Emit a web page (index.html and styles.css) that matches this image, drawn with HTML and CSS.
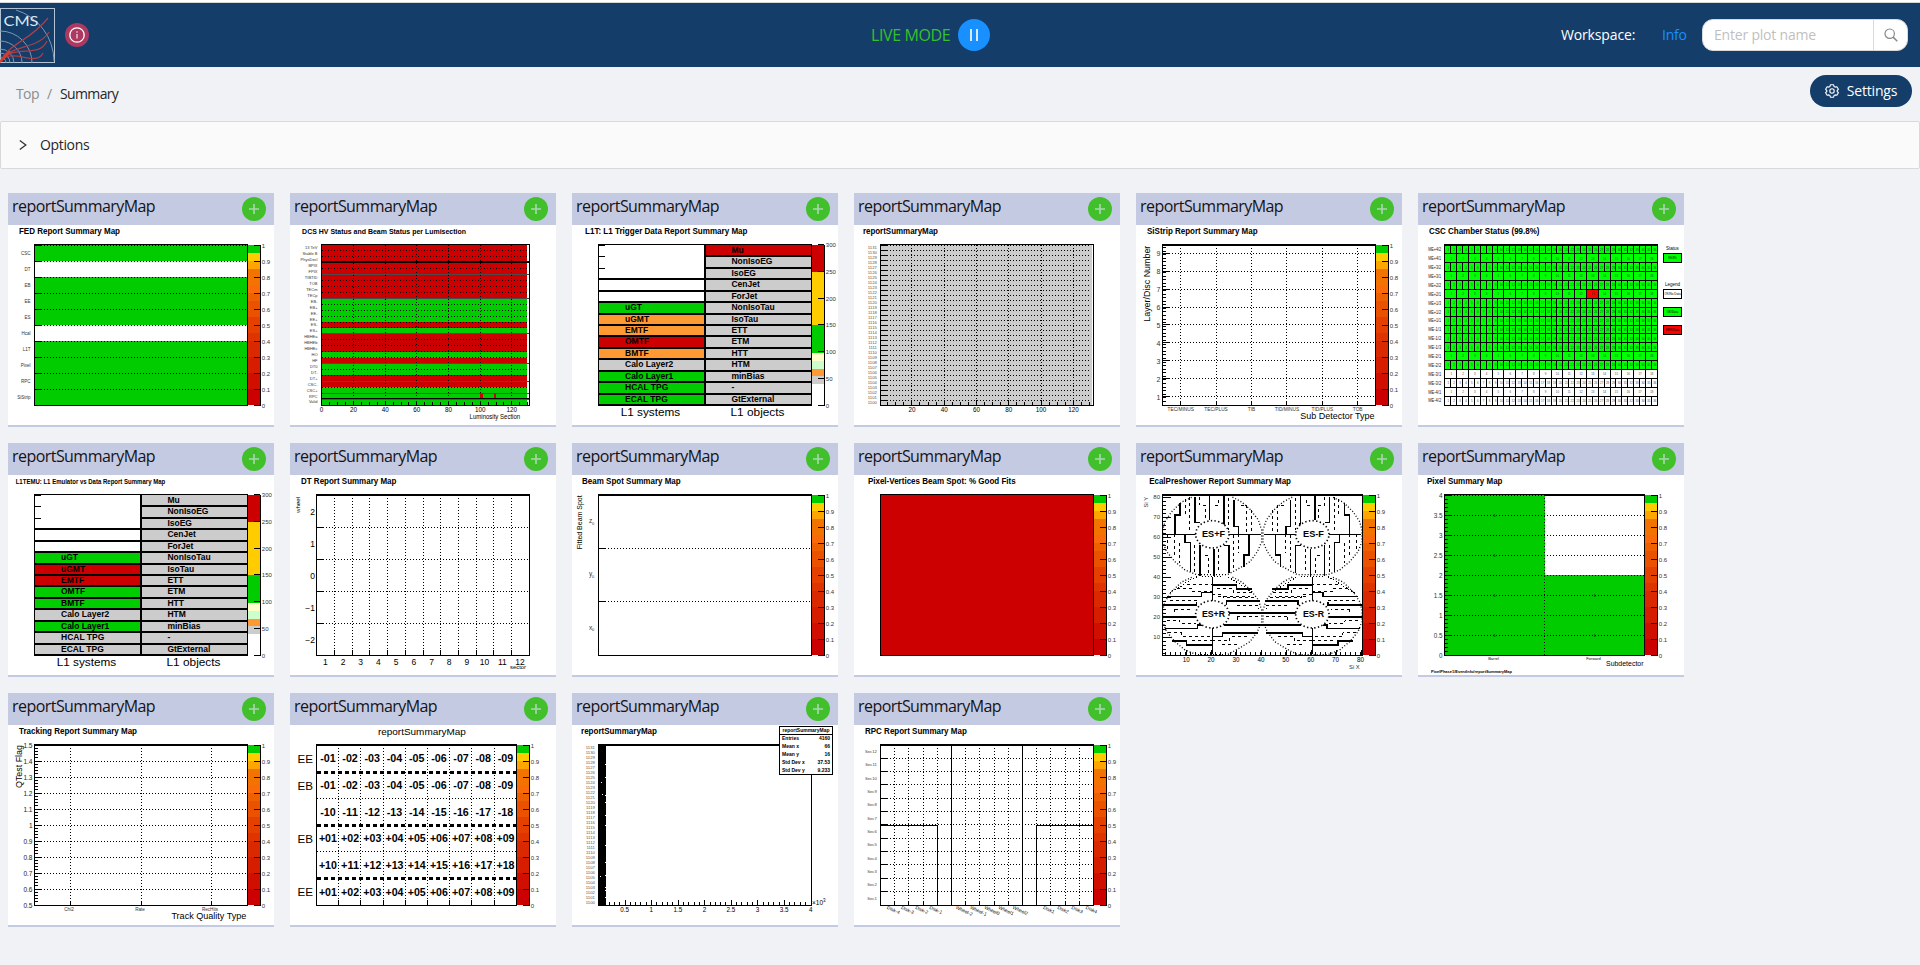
FILE: index.html
```html
<!DOCTYPE html>
<html lang="en">
<head>
<meta charset="utf-8">
<title>CMS DQM - Summary</title>
<link rel="stylesheet" href="styles.css">
</head>
<body>
<header class="topbar">
  <div class="brand">
    <svg class="logo" width="55" height="55" viewBox="0 0 55 55">
      <g fill="none" stroke="#7f98b5" stroke-width="1">
        <rect x=".5" y=".5" width="54" height="54" stroke="#b4c3d4"/>
        <path d="M0 49a6 6 0 0 1 6 6M0 45a10 10 0 0 1 10 10M0 41a14 14 0 0 1 14 14M0 33a22 22 0 0 1 22 22M0 23a32 32 0 0 1 32 32M16 2a54 54 0 0 1 38 51"/>
      </g>
      <g fill="none" stroke="#a93f48" stroke-width="1.3">
        <path d="M0 54C10 34 29 34 48 10M0 54C10 36 38 42 49 24M0 54C14 34 38 52 47 33M0 54C12 38 36 60 43 45"/>
      </g>
      <path d="M0 54L10 43" stroke="#e03a2c" stroke-width="2"/>
      <text class="logo-text" x="3.5" y="18" textLength="35" lengthAdjust="spacingAndGlyphs">CMS</text>
    </svg>
    <span class="info-badge">
      <svg width="16" height="16" viewBox="0 0 16 16"><circle cx="8" cy="8" r="7.2" fill="none" stroke="#fff" stroke-width="1.3"/><path d="M8 7v4.6M8 4.2v1.5" stroke="#e3c3d0" stroke-width="1.5"/></svg>
    </span>
  </div>
  <div class="live"><span class="live-text">LIVE MODE</span><span class="pause"><i></i><i></i></span></div>
  <div class="tools">
    <span class="ws-label">Workspace:</span><a class="ws-link">Info</a>
    <div class="search"><span class="search-text">Enter plot name</span><span class="search-btn">
      <svg width="14" height="14" viewBox="0 0 14 14" fill="none" stroke="#888" stroke-width="1.2"><circle cx="5.7" cy="5.7" r="4.7"/><path d="M9.1 9.1L13.3 13.3" stroke-width="1.5"/></svg></span></div>
  </div>
</header>
<nav class="crumbs">
  <div><span class="crumb-top">Top</span><span class="sep">/</span><span class="crumb-cur">Summary</span></div>
  <button class="settings">
    <svg width="14" height="14" viewBox="0 0 14 14" fill="none" stroke="#fff" stroke-width="1.1" stroke-linejoin="round"><circle cx="7" cy="7" r="2.2"/><path d="M5.4.8h3.2l.5 1.7 1 .6 1.8-.4 1.5 2.6L12.200 6.500v1l1.200 1.200-1.500 2.600-1.800-.4-1 .6-.5 1.700H5.400l-.5-1.700-1-.6-1.800.4L.6 8.700l1.200-1.200v-1L.6 5.300l1.500-2.600 1.800.4 1-.6z"/></svg>
    <span>Settings</span>
  </button>
</nav>
<section class="options">
  <svg width="8" height="10" viewBox="0 0 8 10" fill="none" stroke="#333" stroke-width="1.3"><path d="M.8.6L6.800 5L.8 9.400"/></svg>
  <span>Options</span>
</section>
<main class="plots" id="plots"></main>
<script src="plots.js"></script>
</body>
</html>
```
FILE: styles.css
```css
* { box-sizing: border-box; }
body {
  margin: 0;
  background: #f0f2f5;
  font: 14px/22px "Open Sans", "Noto Sans", sans-serif;
  color: #262626;
  border-top: 2px solid #fff;
  height: 965px;
  overflow: hidden;
}
.topbar {
  height: 65px;
  border-top: 1px solid #d5d8dc;
  background: #143d69;
  display: grid;
  grid-template-columns: 871px 1fr auto;
  align-items: center;
}
.brand { display: flex; align-items: center; gap: 10px; }
.logo { display: block; }
.logo-text { font: 14px Lato, sans-serif; fill: #dfe6ee; }
.info-badge {
  width: 24px; height: 24px; border-radius: 50%;
  background: #ad3961;
  display: flex; align-items: center; justify-content: center;
}
.live { display: flex; align-items: center; gap: 7px; color: #36c02c; font-size: 16px; }
.live-text { letter-spacing: -.4px; width: 80px; white-space: nowrap; }
.pause {
  width: 32px; height: 32px; border-radius: 50%; background: #1890ff;
  display: flex; align-items: center; justify-content: center; gap: 4px;
}
.pause i { width: 2px; height: 12px; background: #d5eaff; }
.tools { display: flex; align-items: center; padding-right: 12px; }
.ws-label { color: #fff; width: 101px; font-weight: 500; white-space: nowrap; letter-spacing: -.15px; }
.ws-link { color: #1890ff; width: 40px; letter-spacing: -.2px; }
.search {
  width: 206px; height: 32px; background: #fff; border: 1px solid #d9d9d9; border-radius: 11px;
  display: flex; align-items: stretch; line-height: 30px; color: #bfbfbf;
}
.search-text { flex: 1; padding-left: 11px; white-space: nowrap; letter-spacing: -.2px; }
.search-btn { width: 34px; border-left: 1px solid #d9d9d9; display: flex; align-items: center; justify-content: center; }
.crumbs { height: 54px; display: flex; justify-content: space-between; padding: 8px 8px 0 16px; }
.crumbs > div { padding-top: 8px; }
.crumb-top, .sep { color: #8c8c8c; }
.crumb-top { letter-spacing: -.6px; }
.sep { margin: 0 8px; }
.crumb-cur { letter-spacing: -.65px; }
.settings {
  width: 102px; height: 32px; border: 0; border-radius: 16px; background: #143d69; color: #fff;
  font: inherit; letter-spacing: -.2px; display: flex; align-items: center; justify-content: center; gap: 8px; padding: 0;
}
.options {
  height: 48px; border: 1px solid #d9d9d9; border-radius: 2px; background: #fafafa;
  display: flex; align-items: center; gap: 13px; padding-left: 18px; letter-spacing: -.35px;
}
.plots { padding: 24px 8px; display: grid; grid-template-columns: repeat(6, 266px); gap: 16px; }
.card { background: #fff; border-bottom: 2px solid #c5cae3; height: 234px; }
.card-head {
  height: 32px; background: #c5cae3; display: flex; justify-content: space-between;
  padding: 4px 8px 0 4px;
}
.card-title { font-size: 16px; line-height: 18px; letter-spacing: -.55px; color: #141414; }
.add {
  width: 24px; height: 24px; border-radius: 50%; background: #41c02c;
  display: flex; align-items: center; justify-content: center;
}
.plot { display: block; }
.plot text { font-family: "Liberation Sans", Arial, sans-serif; fill: #000; }
.plot .b { font-weight: bold; }
```
FILE: plots.js
```js
// Builds small SVG text/line fragments on a 266x200 canvas.
const r = n => Math.round(n * 100) / 100;
const half = n => Math.floor(n) + .5;

function T(x, y, s, size, o = {}) {
  const a = o.a ? ` text-anchor="${o.a}"` : '';
  const l = o.len ? ` textLength="${r(o.len)}" lengthAdjust="spacingAndGlyphs"` : '';
  const t = o.rot ? ` transform="rotate(${o.rot} ${r(x)} ${r(y)})"` : '';
  const f = o.f ? ` style="fill:${o.f}"` : '';
  return `<text x="${r(x)}" y="${r(y)}" font-size="${size}"${a}${l}${t}${f}${o.b ? ' class="b"' : ''}>${s}</text>`;
}
const R = (x, y, w, h, f, st = '') => `<rect x="${r(x)}" y="${r(y)}" width="${r(w)}" height="${r(h)}" fill="${f}" ${st} shape-rendering="crispEdges"/>`;
const P = (d, w = 1, extra = '') => `<path d="${d}" fill="none" stroke="#000" stroke-width="${w}" shape-rendering="crispEdges" ${extra}/>`;
const DOT = 'stroke-dasharray="1 2"';
const H = (y, x1, x2, w, e) => P(`M${r(x1)} ${w === 2 ? Math.round(y) : half(y)}H${r(x2)}`, w, e);
const V = (x, y1, y2, w, e) => P(`M${half(x)} ${r(y1)}V${r(y2)}`, w, e);
const frame = (x2 = 239, top = 1) => P(`M26.500 19.500H${x2 + .5}V180.500H26.500Z`) + (top > 1 ? P(`M26 20H${x2 + 1}`, 2) : '');
const title = (x1, x2, s, size = 8.5) => T(x1, 9.3, s, size, { b: 1, len: x2 - x1 });

const PAL = [[0, .1, '#cc0000'], [.1, .2, '#d00f00'], [.2, .3, '#d61d00'], [.3, .4, '#da2800'], [.4, .45, '#df3400'],
  [.45, .55, '#e64000'], [.55, .65, '#ea5200'], [.65, .7, '#ee6000'], [.7, .75, '#fa6a0a'], [.75, .85, '#f27300'],
  [.85, .9, '#ffa500'], [.9, .95, '#ffcc00'], [.95, 1, '#00cc00']];
function bar(x = 240) {
  let s = PAL.map(([a, b, c]) => R(x, 180 - b * 160, 12, (b - a) * 160, c)).join('');
  s += V(x + 12, 20, 181, 1);
  for (let i = 0; i <= 10; i++) {
    const y = 180 - i * 16;
    s += H(y, x + 6, x + 12, 1) + T(x + 13.800, y + 2.700, i === 0 ? '0' : i === 10 ? '1' : '0.' + i, 6, { f: '#333' });
  }
  return s;
}
function bar300() {
  let s = '';
  [[20, 47, '#cc0000'], [47, 100, '#ffcc00'], [100, 127.700, '#00cc00'], [127.700, 136, '#ffffcc'], [136, 144, '#ccffcc'], [144, 151, '#ff9933'], [151, 159, '#cccccc']]
    .forEach(([a, b, c]) => { s += R(240, a, 12, b - a, c); });
  s += V(252, 20, 181, 1);
  for (let i = 0; i <= 6; i++) s += H(180 - i * 26.670, 246, 252, 1) + T(253.800, 182.500 - i * 26.670, i * 50, 6, { f: '#333' });
  return s;
}
function fed() {
  let s = R(27, 20, 212, 160, '#00cc00') + R(27, 36, 212, 16, '#fff') + R(27, 100, 212, 16, '#fff');
  ['CSC', 'DT', 'EB', 'EE', 'ES', 'Hcal', 'L1T', 'Pixel', 'RPC', 'SiStrip'].forEach((n, i) => {
    s += H(20 + i * 16, 27, 239, 1, DOT) + H(20 + i * 16, 27, 33, 1) + T(22.500, 30 + i * 16, n, 4.500, { a: 'end', f: '#333' });
  });
  return title(10.900, 112, 'FED Report Summary Map') + s + frame() + bar();
}
function dcs() {
  const n = ['13 TeV', 'Stable B', 'PhysDecl', 'BPIX', 'FPIX', 'TIBTID', 'TOB', 'TECm', 'TECp', 'EB-', 'EB+', 'EE-', 'EE+', 'ES-', 'ES+', 'HBHEa', 'HBHEb', 'HBHEc', 'HO', 'HF', 'DT0', 'DT-', 'DT+', 'CSC-', 'CSC+', 'RPC', 'Valid'];
  const c = 'RRRRRRRRRGGGGRGRRRGRGGRRGGG', h = 160 / 27;
  let s = title(12.100, 176, 'DCS HV Status and Beam Status per Lumisection', 7.300);
  n.forEach((t, i) => {
    s += R(32, Math.round(20 + i * h), 205, Math.round(20 + (i + 1) * h) - Math.round(20 + i * h), c[i] === 'R' ? '#cc0000' : '#00cc00');
    s += T(27.500, 24.400 + i * h, t, 4, { a: 'end', f: '#333' });
  });
  for (let i = 1; i < 27; i++) s += H(20 + i * h, 32, 237, 1, DOT);
  for (let i = 1; i < 7; i++) s += V(31.800 + i * 31.670, 20, 180, 1, DOT) + T(31.800 + i * 31.670, 187, i * 20, 6.300, { a: 'middle' });
  for (let i = 0; i < 27; i++) s += V(31.800 + i * 7.920, 177, 180, 1);
  s += T(31.500, 187, '0', 6.300, { a: 'middle' });
  s += R(190, 169, 2.500, 4, '#cc0000') + R(204, 169, 2, 4, '#cc0000');
  [49, 73, 108, 138, 156, 168].forEach(y => { s += R(32, y, 207, 1, '#4b4b4b'); });
  s += H(37, 32, 239, 2) + R(32, 173, 207, 1, '#000') + R(32, 174, 207, 1, '#555');
  return s + P('M31.500 19.500H239.500V180.500H31.500Z') + T(179.600, 194, 'Luminosity Section', 6.500, { len: 50.500 });
}
function l1(ttl, left, mu) {
  const c = { G: '#00cc00', O: '#ff9933', R: '#cc0000', g: '#cccccc', W: '#fff' };
  const L = ['', '', '', '', '', 'uGT', 'uGMT', 'EMTF', 'OMTF', 'BMTF', 'Calo Layer2', 'Calo Layer1', 'HCAL TPG', 'ECAL TPG'];
  const Q = ['Mu', 'NonIsoEG', 'IsoEG', 'CenJet', 'ForJet', 'NonIsoTau', 'IsoTau', 'ETT', 'ETM', 'HTT', 'HTM', 'minBias', '-', 'GtExternal'];
  const h = 160 / 14;
  let s = ttl;
  for (let i = 0; i < 14; i++) {
    const y = Math.round(20 + i * h), y2 = Math.round(20 + (i + 1) * h);
    s += R(27, y, 106, y2 - y, c[left[i]]) + R(133, y, 106, y2 - y, i ? c.g : mu);
    s += T(53, y + 8.200, L[i], 8.500, { b: 1 }) + T(159.400, y + 8.200, Q[i], 8.500, { b: 1 });
    if (i) s += H(y, i > 2 ? 27 : 133, 239, 2);
    if (i < 3) s += H(y, 27, 33, 1);
  }
  s += P('M133 20V181', 2) + frame(239) + P('M26 180H240', 2);
  return s + T(48.700, 191.300, 'L1 systems', 11, { len: 59.500 }) + T(158.500, 191.300, 'L1 objects', 11, { len: 54 }) + bar300();
}
const vals = () => { let s = ''; for (let i = 0; i < 32; i++) s += T(22.800, 24.300 + i * 5, 1131 - i, 4.200, { a: 'end', f: '#555' }); return s; };
function lumi() {
  let s = title(8.900, 84, 'reportSummaryMap') + R(27, 20, 210.500, 160, '#cccccc') + vals();
  for (let i = 0; i < 32; i++) s += H(20 + i * 5, 27, 237, 1, DOT) + H(20 + i * 5, 27, 33, 1);
  for (let i = 1; i < 7; i++) s += V(25.600 + i * 32.300, 20, 180, 1, DOT) + T(25.600 + i * 32.300, 187, i * 20, 6.300, { a: 'middle' });
  for (let i = 1; i < 27; i++) s += V(25.600 + i * 8.070, i % 4 ? 177 : 175, 180, 1);
  return s + frame();
}
function strip() {
  let s = title(11, 121.600, 'SiStrip Report Summary Map');
  for (let i = 1; i < 10; i++) { const y = 189.400 - i * 17.900; s += H(y, 27, 239, 1, DOT) + H(y, 27, 33, 1) + T(24.500, y + 3, i, 7, { a: 'end', f: '#333' }); }
  for (let i = 0; i < 45; i++) s += H(180 - i * 3.580, 27, 30, 1);
  ['TEC/MINUS', 'TEC/PLUS', 'TIB', 'TID/MINUS', 'TID/PLUS', 'TOB'].forEach((n, i) => { const x = 44.700 + i * 35.400; s += V(x, 20, 180, 1, DOT) + V(x, 176, 180, 1) + T(x, 185.500, n, 4.800, { a: 'middle', f: '#333' }); });
  return s + T(164.200, 194, 'Sub Detector Type', 8.500, { len: 74.300 }) + T(14.300, 96.700, 'Layer/Disc Number', 8.500, { rot: -90, len: 76 }) + frame(239, 2) + bar();
}
function csc() {
  const n = ['+4/2', '+4/1', '+3/2', '+3/1', '+2/2', '+2/1', '+1/3', '+1/2', '+1/1', '-1/1', '-1/2', '-1/3', '-2/1', '-2/2', '-3/1', '-3/2', '-4/1', '-4/2'];
  const wide = [1, 3, 5, 12, 14, 16], h = 160 / 18;
  let s = title(10.900, 121.500, 'CSC Chamber Status (99.8%)') + R(27, 20, 212, 124.500, '#00ff00') + R(168.500, 64, 12, 9, '#ff0000');
  n.forEach((t, i) => {
    const y = 20 + i * h, k = wide.includes(i) ? 18 : 36, w = 212.400 / k;
    s += H(y, 27, 239, 1) + T(23.200, y + 6.300, 'ME' + t, 4.500, { a: 'end', f: '#222', len: 13 });
    for (let j = 0; j < k; j++) {
      if (j) s += V(26.800 + j * w, y, y + h, 1);
      s += T(27.300 + (j + .5) * w, y + 5.800, j + 1, 2.800, { a: 'middle', f: i > 13 ? '#444' : '#052' });
    }
  });
  s += frame() + T(254.500, 24.800, 'Status', 4.500, { a: 'middle' }) + T(254.500, 61, 'Legend', 4.500, { a: 'middle' });
  [[28.500, '#00ff00', '99.8%'], [64.500, '#fff', 'OK/No Data'], [82.500, '#00ff00', 'OK/Data'], [100.500, '#ff0000', 'ERR/Data']].forEach(([y, c, t]) => {
    s += R(245.500, y, 18, 9, c, 'stroke="#000"') + T(254.500, y + 5.800, t, 3, { a: 'middle' });
  });
  return s;
}
function dt() {
  let s = title(11, 106.400, 'DT Report Summary Map');
  for (let i = 1; i < 5; i++) s += H(20 + i * 32, 27, 239, 1, DOT) + H(20 + i * 32, 27, 33, 1);
  [2, 1, 0, '−1', '−2'].forEach((n, i) => { s += T(25, 40 + i * 32, n, 8.500, { a: 'end' }); });
  for (let i = 0; i < 12; i++) {
    if (i) s += V(26.800 + i * 17.700, 20, 180, 1, DOT) + V(26.800 + i * 17.700, 175, 180, 1);
    s += T(35.300 + i * 17.700, 189.500, i + 1, 8.500, { a: 'middle' });
  }
  return s + T(220, 193.700, 'sector', 6, { len: 16 }) + T(10, 38, 'wheel', 6, { rot: -90, len: 16 }) + frame(239, 2);
}
function beam() {
  let s = title(10.100, 108.700, 'Beam Spot Summary Map') + H(73, 27, 239, 1, DOT) + H(73, 27, 33, 1) + H(126, 27, 239, 1, DOT) + H(126, 27, 33, 1);
  ['z', 'y', 'x'].forEach((n, i) => { s += T(17, 48 + i * 53.300, n, 6.500, { f: '#333' }) + T(20, 49.500 + i * 53.300, '0', 4, { f: '#333' }); });
  return s + T(10.500, 74.300, 'Fitted Beam Spot', 7, { rot: -90, len: 54 }) + frame(239, 2) + bar();
}
const vertices = () => title(13.900, 161.700, 'Pixel-Vertices Beam Spot: % Good Fits') + R(27, 20, 212, 160, '#cc0000') + frame() + bar();

// Preshower quadrants are drawn on a 3x grid; the right half mirrors the left.
function preshower() {
  const thickF = 'M90 68V105H75V163M40 163H137M135 50V128H150M179 48V120M222 48V132H226M252 60V140H266V163M237 163H333M105 165V188H121V275M150 196V287M192 206V287M222 196H237V280M297 163V225H282V262';
  const thickR = 'M187 290V365M187 444V522M187 315H260V327H307M50 350H155V338H187M37 375H140V366M230 375V363H330M37 411H137M237 399H338M45 446H143V435H155M222 435H338M187 470H217V459H325M65 483H110V495H187';
  const thinF = 'M108 56V110M120 52V150M150 50V76H168V120M205 60V76H193M236 55V150M272 76H290V163M305 90V160M54 163V215M75 163V235M90 190V250M135 195V280M165 228H177V287M206 206V270M252 165V270M266 163V220';
  const thinR = 'M110 315H187M80 327H125V335H187M200 327H250V338H315M205 350H300M187 345H220V354H320M60 363H140M75 388H130M75 388V400M50 422H90V430H137M262 376H325V388M262 411V422M262 411H325M55 459H95V470H187M187 483H240V470H300M125 483H187M217 495H262';
  const g = (k, d) => `<path d="${d}" fill="none" stroke="#000" stroke-width="${k ? 4.5 : 3}" shape-rendering="crispEdges" ${k ? '' : 'stroke-dasharray="9 9"'}/>`;
  const outline = cy => `<path transform="translate(0 ${cy - 165})" d="M125 52L95 66L65 95L45 125L38 150V185L50 215L75 245L105 270L140 284H232L262 268L300 245L322 215L335 185V150L325 120L300 88L275 66L245 50" fill="none" stroke="#000" stroke-width="4" stroke-dasharray="3 6"/>`;
  const inner = cy => `<ellipse cx="187" cy="${cy}" rx="50" ry="41" fill="#fff" stroke="#000" stroke-width="5" stroke-dasharray="4 7"/>`;
  const side = outline(165) + outline(405) + P('M155 290H220M140 290L125 298L90 320L60 338M235 292L270 312L310 340', 4, DOT.replace('1 2', '3 6'))
    + g(1, thickF) + g(1, thickR) + g(0, thinF) + g(0, thinR) + inner(163) + inner(403);
  let s = title(13.200, 155, 'EcalPreshower Report Summary Map');
  s += `<g transform="translate(14 5) scale(.33333)">${side}<g transform="translate(674 0) scale(-1 1)">${side}</g></g>`;
  [['ES+F', 66, 62], ['ES-F', 167, 62], ['ES+R', 66, 142], ['ES-R', 167, 142]].forEach(([t, x, y]) => { s += T(x, y, t, 8.500, { b: 1, len: t[2] === '+' ? 23 : 21 }); });
  for (let k = 1; k < 9; k++) {
    s += H(182 - k * 20, 27, 35, 1) + T(24, 184 - k * 20, k * 10, 6, { a: 'end', f: '#333' });
    s += V(25 + k * 25, 175, 180, 1) + T(25.300 + k * 24.900, 186.700, k * 10, 6.300, { a: 'middle' });
  }
  for (let k = 0; k < 40; k++) s += V(29 + k * 5, 177, 180, 1) + H(178 - k * 4, 27, 30, 1);
  return s + T(213, 193.500, 'Si X', 6, { len: 10.700, f: '#333' }) + T(12, 32.500, 'Si Y', 6, { rot: -90, len: 10.500, f: '#333' }) + frame(226, 2) + bar(227);
}
function pixel() {
  let s = title(9, 84.500, 'Pixel Summary Map') + R(27, 20, 100, 160, '#00cc00') + R(126, 100, 100.500, 80, '#00cc00') + V(126, 20, 180, 1, DOT);
  for (let k = 0; k < 9; k++) s += H(180 - k * 20, 27, 226, 1, k ? DOT : '') + H(180 - k * 20, 27, 33, 1) + T(24.500, 182.500 - k * 20, k / 2, 6.300, { a: 'end', f: '#333' });
  for (let k = 0; k < 40; k++) s += H(180 - k * 4, 27, 30, 1);
  [[76.500, 40], [76.500, 80], [76.500, 120], [176.500, 120], [76.500, 160], [176.500, 160]].forEach(([x, y]) => { s += T(x, y + 1.500, '1', 4, { a: 'middle' }); });
  s += T(75.500, 185, 'Barrel', 4, { a: 'middle' }) + T(175.500, 185, 'Forward', 4, { a: 'middle' });
  return s + T(188, 190.700, 'Subdetector', 7, { len: 37.500 }) + T(13, 197.700, 'PixelPhase1/EventInfo/reportSummaryMap', 4, { b: 1, len: 81 }) + frame(226) + P('M126 20H227', 2) + bar(227);
}
function tracking() {
  let s = title(11, 129, 'Tracking Report Summary Map');
  for (let k = 0; k < 11; k++) s += (k ? H(180 - k * 16, 27, 239, 1, DOT) : '') + H(180 - k * 16, 27, 33, 1) + T(24.500, 182.500 - k * 16, k === 5 ? '1' : (.5 + k / 10).toFixed(1), 6.500, { a: 'end', f: '#222' });
  for (let k = 0; k < 50; k++) s += H(180 - k * 3.200, 27, 30, 1);
  [['Chi2', 62], ['Rate', 133], ['RecHits', 203]].forEach(([t, x]) => { s += V(x, 20, 180, 1, DOT) + V(x, 176, 180, 1) + T(x - 1, 185.500, t, 4.600, { a: 'middle', f: '#333' }); });
  return s + T(163.400, 194, 'Track Quality Type', 8.500, { len: 75 }) + T(14, 63, 'QTest Flag', 8.500, { rot: -90, len: 43 }) + frame(239, 2) + bar();
}
function ecal() {
  let s = T(87.900, 9.500, 'reportSummaryMap', 9.800, { len: 88 });
  const w = 22.200;
  const rows = [['-', 1], ['-', 1], ['-', 10], ['+', 1], ['+', 10], ['+', 1]];
  rows.forEach(([g, st], i) => {
    for (let j = 0; j < 9; j++) s += T(26.800 + (j + .5) * w, 37.300 + i * 26.650, g + String(st + j).padStart(2, '0'), 10.300, { b: 1, a: 'middle', len: g === '-' ? 15.500 : 18 });
    if (i) s += i % 2 ? P(`M27 ${Math.round(20 + i * 26.670)}H226`, 3, 'stroke-dasharray="4 3"') : H(20 + i * 26.670, 27, 226, 1, DOT);
  });
  for (let j = 1; j < 9; j++) s += V(26.500 + j * w, 20, 180, 1, DOT) + V(26.500 + j * w, 175, 180, 1);
  [['EE', 0], ['EB', 1], ['EB', 3], ['EE', 5]].forEach(([t, i]) => { s += T(7.500, 38.300 + i * 26.600, t, 11.500, { len: 15.500 }); });
  return s + frame(226, 2) + bar(227);
}
function hist() {
  let s = title(9, 85, 'reportSummaryMap') + vals() + R(27, 20, 7, 160, '#000') + frame(239, 2);
  [39, 52, 70, 77, 90, 100, 120, 137, 150, 162, 165, 172].forEach(y => { s += R(33, y, 1, 1, '#fff'); });
  s += R(29, 57, 1, 1, '#fff') + R(30, 69, 1, 1, '#fff') + R(28, 151, 1, 1, '#fff');
  for (let k = 0; k < 40; k++) s += V(26.500 + k * 5.310, k % 5 ? 177 : 175, 180, 1);
  for (let k = 1; k < 9; k++) s += T(26 + k * 26.600, 187, k / 2, 6.300, { a: 'middle' });
  s += T(240, 180, '×10', 6.500) + T(251, 176.500, '3', 4.500) + R(207.500, 1.500, 53, 48, '#fff', 'stroke="#000"') + H(9, 208, 260, 1);
  s += T(234, 7.300, 'reportSummaryMap', 5, { b: 1, a: 'middle', len: 47 });
  [['Entries', '4160'], ['Mean x', '66'], ['Mean y', '16'], ['Std Dev x', '37.53'], ['Std Dev y', '9.233']].forEach(([a, b], i) => { s += T(210, 15.200 + i * 8, a, 5, { b: 1 }) + T(258, 15.200 + i * 8, b, 5, { b: 1, a: 'end' }); });
  return s;
}
function rpc() {
  let s = title(11, 112.800, 'RPC Report Summary Map');
  const w = 14.200;
  for (let k = 0; k < 12; k++) s += (k ? H(20 + k * 13.330, 27, 239, 1, DOT) : '') + H(20 + k * 13.330, 27, 33, 1) + T(22.800, 28 + k * 13.330, 'Sec' + (12 - k), 4.200, { a: 'end', f: '#444' });
  for (let k = 1; k < 15; k++) s += V(26.400 + k * w, 20, 180, 1, k === 5 || k === 10 ? '' : DOT) + V(26.400 + k * w, 176, 180, 1);
  s += P('M27 100.500H83.500V180M239 100.500H182.500V180');
  ['Disk-4', 'Disk-3', 'Disk-2', 'Disk-1', '', 'Wheel-2', 'Wheel-1', 'Wheel0', 'Wheel1', 'Wheel2', '', 'Disk1', 'Disk2', 'Disk3', 'Disk4'].forEach((t, k) => { if (t) s += T(32.500 + k * w - (t[0] === 'W' ? 2 : 0), 183.500, t, 4.800, { rot: 25 }); });
  return s + frame(239, 2) + bar();
}

const plots = [fed, dcs,
  () => l1(title(13, 175.500, 'L1T: L1 Trigger Data Report Summary Map'), 'WWWWWGOOROgGGG', '#cc0000'),
  lumi, strip, csc,
  () => l1(T(7.700, 8.700, 'L1TEMU: L1 Emulator vs Data Report Summary Map', 6.300, { b: 1, len: 149.500 }), 'WWWWWGRRGGgGgg', '#cccccc'),
  dt, beam, vertices, preshower, pixel, tracking, ecal, hist, rpc];

document.getElementById('plots').innerHTML = plots.map(f => `<article class="card">
  <div class="card-head"><span class="card-title">reportSummaryMap</span><span class="add"><svg width="12" height="12" viewBox="0 0 12 12"><path d="M6 1v10M1 6h10" stroke="#a9d6b2" stroke-width="1.600"/></svg></span></div>
  <svg class="plot" width="266" height="200" viewBox="0 0 266 200">${f()}</svg></article>`).join('');
```
